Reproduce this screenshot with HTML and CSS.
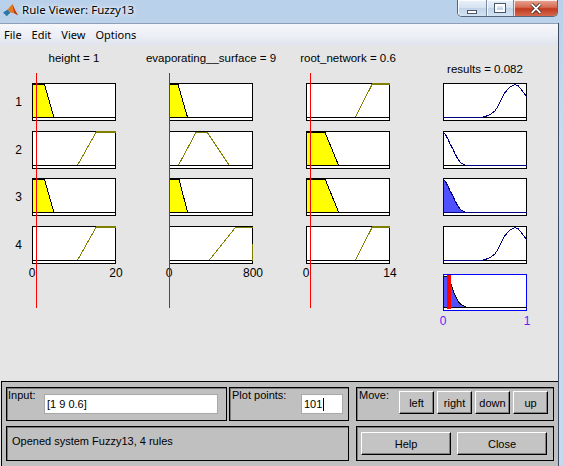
FILE: index.html
```html
<!DOCTYPE html>
<html lang="en">
<head>
    <meta charset="UTF-8">
    <title>Rule Viewer: Fuzzy13</title>
    <link rel="stylesheet" href="styles.css">
</head>
<body>

<div class="window">
    <div class="titlebar">
        <svg class="app-icon" viewBox="0 0 16 16">
            <polygon points="0,10 5,7 8,10 4,14" fill="#2b78a8"/>
            <polygon points="5,7 10,1 13,8 16,13 12,11 8,10" fill="#e27a1c"/>
            <polygon points="10,1 13,8 16,13 12,11" fill="#c0361b"/>
        </svg>
        <span class="title">Rule Viewer: Fuzzy13</span>
        <div class="win-buttons">
            <span class="wb min"></span>
            <span class="wb max"></span>
            <span class="wb close">
                <svg viewBox="0 0 16 12">
                    <path d="M3,1 L13,11 M13,1 L3,11" stroke="#3a2a28" stroke-width="4"/>
                    <path d="M3,1 L13,11 M13,1 L3,11" stroke="#fff" stroke-width="2.2"/>
                </svg>
            </span>
        </div>
    </div>

    <div class="client">
        <div class="menubar">
            <span>File</span>
            <span>Edit</span>
            <span>View</span>
            <span>Options</span>
        </div>

        <div class="figure">
            <div class="plots">
                <!-- rule numbers -->
                <div class="rule-nums">
                    <div>1</div>
                    <div>2</div>
                    <div>3</div>
                    <div>4</div>
                </div>

                <!-- input: height -->
                <div class="var-col">
                    <div class="var-title"><span>height = 1</span></div>
                    <div class="mf-stack">
                        <svg class="mf" viewBox="0 0 84 38" shape-rendering="crispEdges">
                            <rect class="frame" x="0.5" y="0.5" width="83" height="37"/>
                            <polygon class="fill-in" points="0.5,34.5 0.5,1.5 12.5,1.5 22,34.5"/>
                            <polyline class="edge" points="0,1.5 12.5,1.5 22,34.5"/>
                            <line class="base" x1="0" y1="34.5" x2="84" y2="34.5"/>
                        </svg>
                        <svg class="mf" viewBox="0 0 84 38" shape-rendering="crispEdges">
                            <rect class="frame" x="0.5" y="0.5" width="83" height="37"/>
                            <polyline class="olive" points="45.3,34.5 64,1.5 84,1.5"/>
                            <line class="olive" x1="64" y1="0.5" x2="84" y2="0.5"/>
                            <line class="base" x1="0" y1="34.5" x2="84" y2="34.5"/>
                        </svg>
                        <svg class="mf" viewBox="0 0 84 38" shape-rendering="crispEdges">
                            <rect class="frame" x="0.5" y="0.5" width="83" height="37"/>
                            <polygon class="fill-in" points="0.5,34.5 0.5,1.5 12.5,1.5 22,34.5"/>
                            <polyline class="edge" points="0,1.5 12.5,1.5 22,34.5"/>
                            <line class="base" x1="0" y1="34.5" x2="84" y2="34.5"/>
                        </svg>
                        <svg class="mf" viewBox="0 0 84 38" shape-rendering="crispEdges">
                            <rect class="frame" x="0.5" y="0.5" width="83" height="37"/>
                            <polyline class="olive" points="45.3,34.5 64,1.5 84,1.5"/>
                            <line class="olive" x1="64" y1="0.5" x2="84" y2="0.5"/>
                            <line class="base" x1="0" y1="34.5" x2="84" y2="34.5"/>
                        </svg>
                    </div>
                    <div class="axis"><span class="lo">0</span><span class="hi">20</span></div>
                    <div class="cursor" style="left: 4px;"></div>
                </div>

                <!-- input: evaporating__surface -->
                <div class="var-col">
                    <div class="var-title"><span>evaporating__surface = 9</span></div>
                    <div class="mf-stack">
                        <svg class="mf" viewBox="0 0 84 38" shape-rendering="crispEdges">
                            <rect class="frame" x="0.5" y="0.5" width="83" height="37"/>
                            <polygon class="fill-in" points="0.5,34.5 0.5,1.5 9,1.5 18.6,34.5"/>
                            <polyline class="edge" points="0,1.5 9,1.5 18.6,34.5"/>
                            <line class="base" x1="0" y1="34.5" x2="84" y2="34.5"/>
                        </svg>
                        <svg class="mf" viewBox="0 0 84 38" shape-rendering="crispEdges">
                            <rect class="frame" x="0.5" y="0.5" width="83" height="37"/>
                            <polyline class="olive" points="9.3,34.5 27,1.5 38.3,1.5 60.3,34.5"/>
                            <line class="base" x1="0" y1="34.5" x2="84" y2="34.5"/>
                        </svg>
                        <svg class="mf" viewBox="0 0 84 38" shape-rendering="crispEdges">
                            <rect class="frame" x="0.5" y="0.5" width="83" height="37"/>
                            <polygon class="fill-in" points="0.5,34.5 0.5,1.5 10,1.5 18.7,34.5"/>
                            <polyline class="edge" points="0,1.5 10,1.5 18.7,34.5"/>
                            <line class="base" x1="0" y1="34.5" x2="84" y2="34.5"/>
                        </svg>
                        <svg class="mf" viewBox="0 0 84 38" shape-rendering="crispEdges">
                            <rect class="frame" x="0.5" y="0.5" width="83" height="37"/>
                            <polyline class="olive" points="40,34.5 66.4,1.5 83.5,1.5 83.5,35"/>
                            <line class="edge" x1="83.5" y1="1.5" x2="83.5" y2="18"/>
                            <line class="base" x1="0" y1="34.5" x2="83" y2="34.5"/>
                        </svg>
                    </div>
                    <div class="axis"><span class="lo">0</span><span class="hi">800</span></div>
                    <div class="cursor" style="left: 0px;"></div>
                </div>

                <!-- input: root_network -->
                <div class="var-col">
                    <div class="var-title"><span>root_network = 0.6</span></div>
                    <div class="mf-stack">
                        <svg class="mf" viewBox="0 0 84 38" shape-rendering="crispEdges">
                            <rect class="frame" x="0.5" y="0.5" width="83" height="37"/>
                            <polyline class="olive" points="49.3,34.5 66,1.5 84,1.5"/>
                            <line class="olive" x1="66" y1="0.5" x2="84" y2="0.5"/>
                            <line class="base" x1="0" y1="34.5" x2="84" y2="34.5"/>
                        </svg>
                        <svg class="mf" viewBox="0 0 84 38" shape-rendering="crispEdges">
                            <rect class="frame" x="0.5" y="0.5" width="83" height="37"/>
                            <polygon class="fill-in" points="0.5,34.5 0.5,1.5 19,1.5 32.7,34.5"/>
                            <polyline class="edge" points="0,1.5 19,1.5 32.7,34.5"/>
                            <line class="base" x1="0" y1="34.5" x2="84" y2="34.5"/>
                        </svg>
                        <svg class="mf" viewBox="0 0 84 38" shape-rendering="crispEdges">
                            <rect class="frame" x="0.5" y="0.5" width="83" height="37"/>
                            <polygon class="fill-in" points="0.5,34.5 0.5,1.5 19.3,1.5 32.7,34.5"/>
                            <polyline class="edge" points="0,1.5 19.3,1.5 32.7,34.5"/>
                            <line class="base" x1="0" y1="34.5" x2="84" y2="34.5"/>
                        </svg>
                        <svg class="mf" viewBox="0 0 84 38" shape-rendering="crispEdges">
                            <rect class="frame" x="0.5" y="0.5" width="83" height="37"/>
                            <polyline class="olive" points="49.3,34.5 66,1.5 84,1.5"/>
                            <line class="olive" x1="66" y1="0.5" x2="84" y2="0.5"/>
                            <line class="base" x1="0" y1="34.5" x2="84" y2="34.5"/>
                        </svg>
                    </div>
                    <div class="axis"><span class="lo">0</span><span class="hi">14</span></div>
                    <div class="cursor" style="left: 4px;"></div>
                </div>

                <!-- output: results -->
                <div class="var-col output">
                    <div class="var-title"><span>results = 0.082</span></div>
                    <div class="mf-stack">
                        <svg class="mf" viewBox="0 0 84 38" shape-rendering="crispEdges">
                            <rect class="frame" x="0.5" y="0.5" width="83" height="37"/>
                            <line class="base" x1="0" y1="34.5" x2="84" y2="34.5"/>
                            <polyline class="out-line" points="0,34.5 35,34.5 41.7,33.8 46.7,31.7 51.7,28.3 55,23.3 58.3,16.7 61.7,10 66.7,4 71.7,1.5 75,2.5 78.3,6.7 84,14"/>
                        </svg>
                        <svg class="mf" viewBox="0 0 84 38" shape-rendering="crispEdges">
                            <rect class="frame" x="0.5" y="0.5" width="83" height="37"/>
                            <line class="base" x1="0" y1="34.5" x2="84" y2="34.5"/>
                            <polyline class="out-line" points="0.5,1.5 2.3,3.3 5,8.3 7.3,13.3 10,18.3 12.3,23.3 15,28.3 18.3,32.3 21.7,34 26.7,34.5 84,34.5"/>
                        </svg>
                        <svg class="mf" viewBox="0 0 84 38" shape-rendering="crispEdges">
                            <rect class="frame" x="0.5" y="0.5" width="83" height="37"/>
                            <polygon class="out-fill" points="0.5,34.5 0.5,1.5 2.3,3.3 5,8.3 7.3,13.3 10,18.3 12.3,23.3 15,28.3 18.3,32.3 21.7,34 26.7,34.5"/>
                            <line class="out-line" x1="0" y1="34.5" x2="84" y2="34.5"/>
                        </svg>
                        <svg class="mf" viewBox="0 0 84 38" shape-rendering="crispEdges">
                            <rect class="frame" x="0.5" y="0.5" width="83" height="37"/>
                            <line class="base" x1="0" y1="34.5" x2="84" y2="34.5"/>
                            <polyline class="out-line" points="0,34.5 35,34.5 41.7,33.8 46.7,31.7 51.7,28.3 55,23.3 58.3,16.7 61.7,10 66.7,4 71.7,1.5 75,2.5 78.3,6.7 84,14"/>
                        </svg>
                        <svg class="mf agg" viewBox="0 0 84 37" shape-rendering="crispEdges">
                            <rect class="agg-frame" x="0.5" y="0.5" width="83" height="36"/>
                            <polygon class="out-fill" points="0.5,33.5 0.5,2.5 5,2.5 8.3,10.7 11.7,20.7 15,27.3 18.3,30.7 21.7,32.3 24,33.5"/>
                            <polyline class="edge" points="0.5,2.5 5,2.5 8.3,10.7 11.7,20.7 15,27.3 18.3,30.7 21.7,32.3 24,33.5"/>
                            <line class="base" x1="0" y1="33.5" x2="84" y2="33.5"/>
                            <rect class="defuzz" x="3.5" y="1" width="4.5" height="33.5"/>
                        </svg>
                    </div>
                    <div class="axis out-axis"><span class="lo">0</span><span class="hi">1</span></div>
                </div>
            </div>

            <div class="panel">
                <div class="panel-row">
                    <div class="frame-box input-frame">
                        <span class="frame-label input-label">Input:</span>
                        <div class="field input-field">[1 9 0.6]</div>
                    </div>
                    <div class="frame-box points-frame">
                        <span class="frame-label points-label">Plot points:</span>
                        <div class="field points-field">101<span class="caret"></span></div>
                    </div>
                    <div class="frame-box move-frame">
                        <span class="frame-label move-label">Move:</span>
                        <button class="btn move-btn">left</button>
                        <button class="btn move-btn">right</button>
                        <button class="btn move-btn">down</button>
                        <button class="btn move-btn">up</button>
                    </div>
                </div>
                <div class="panel-row second">
                    <div class="frame-box status-frame">
                        <span class="status-text">Opened system Fuzzy13, 4 rules</span>
                    </div>
                    <div class="frame-box action-frame">
                        <button class="btn action-btn">Help</button>
                        <button class="btn action-btn">Close</button>
                    </div>
                </div>
            </div>
        </div>
    </div>
</div>

</body>
</html>
```

FILE: styles.css
```css
html, body {
    margin: 0;
    padding: 0;
    background-color: #c4d8ee;
}

.window {
    width: 563px;
    height: 466px;
    overflow: hidden;
    background: linear-gradient(180deg, #b9d0ea 0%, #c8dbf0 30%, #c6d9ee 100%);
}

/* title bar */
.titlebar {
    height: 23px;
    display: flex;
    align-items: flex-start;
    padding-left: 3px;
}

.app-icon {
    width: 15px;
    height: 15px;
    margin: 3px 4px 0 0;
}

.title {
    font-family: "Noto Sans", "Open Sans", sans-serif;
    font-size: 11.5px;
    line-height: 20px;
    color: #000;
    text-shadow: 0 0 6px #fff, 0 0 3px #fff;
}

.win-buttons {
    margin-left: auto;
    margin-right: 5px;
    display: flex;
    height: 17px;
    border: 1px solid #56657a;
    border-top: none;
    border-radius: 0 0 5px 5px;
    overflow: hidden;
    box-sizing: border-box;
}

.wb {
    display: flex;
    justify-content: center;
    align-items: center;
    height: 16px;
    background: linear-gradient(180deg, #eaf1f9 0%, #d6e3f2 48%, #c2d4e9 52%, #d3e3f4 100%);
    box-shadow: inset 1px 1px 0 rgba(255, 255, 255, 0.8);
}

.wb.min {
    width: 28px;
    border-right: 1px solid #7b8aa0;
}

.wb.max {
    width: 26px;
    border-right: 1px solid #7b8aa0;
}

.wb.close {
    width: 43px;
    background: linear-gradient(180deg, #e8a797 0%, #d86b52 45%, #c13a20 55%, #d4684d 100%);
}

.wb.min::after {
    content: "";
    width: 8px;
    height: 2px;
    margin-top: 7px;
    background: #fff;
    border: 1px solid #4b5668;
}

.wb.max::after {
    content: "";
    width: 6px;
    height: 4px;
    border: 2px solid #fff;
    outline: 1px solid #4b5668;
}

.wb.close svg {
    width: 14px;
    height: 11px;
}

/* client area */
.client {
    margin-right: 4px;
    border-right: 1px solid #3c4b60;
    height: 443px;
    background-color: #e5e5e5;
}

.menubar {
    height: 21px;
    border-top: 1px solid #8e9fb6;
    background: linear-gradient(180deg, #f6f7fb 0%, #eceef5 60%, #dfe3ec 100%);
    display: flex;
    align-items: center;
    padding-left: 4px;
    font-family: "Noto Sans", "Open Sans", sans-serif;
    font-size: 11px;
    color: #000;
}

.menubar span {
    margin-right: 10px;
}

.figure {
    height: 421px;
    display: flex;
    flex-direction: column;
    background-color: #e5e5e5;
    font-family: "Liberation Sans", Arial, sans-serif;
    color: #000;
}

/* plot grid */
.plots {
    display: flex;
    padding-top: 6px;
}

.rule-nums {
    width: 32px;
    padding-top: 32px;
    display: flex;
    flex-direction: column;
    gap: 9.67px;
    font-size: 12px;
}

.rule-nums div {
    height: 38px;
    line-height: 38px;
    text-align: right;
    padding-right: 10px;
}

.var-col {
    position: relative;
    width: 84px;
    margin-right: 53px;
    display: flex;
    flex-direction: column;
}

.var-col.output {
    margin-right: 0;
}

.var-title {
    display: flex;
    justify-content: center;
    height: 14px;
    line-height: 14px;
    font-size: 11.5px;
    white-space: nowrap;
    margin-bottom: 18px;
}

.output .var-title {
    margin-top: 11px;
    margin-bottom: 7px;
}

.mf-stack {
    display: flex;
    flex-direction: column;
    gap: 9.67px;
}

.output .mf-stack .agg {
    margin-top: 0.33px;
}

.mf {
    display: block;
    width: 84px;
    height: 38px;
}

.mf.agg {
    height: 37px;
}

.frame {
    fill: #fff;
    stroke: #000;
}

.agg-frame {
    fill: #fff;
    stroke: #0000ff;
}

.base {
    stroke: #000;
}

.fill-in {
    fill: #ffff00;
    stroke: none;
}

.edge {
    fill: none;
    stroke: #000;
}

.olive {
    fill: none;
    stroke: #808000;
}

.out-line {
    fill: none;
    stroke: #000080;
}

.out-fill {
    fill: #5050ff;
    stroke: #000080;
}

.defuzz {
    fill: #ff0000;
}

.axis {
    display: flex;
    justify-content: space-between;
    margin-top: 2px;
    height: 14px;
    line-height: 14px;
    font-size: 12px;
}

.axis .lo {
    transform: translateX(-50%);
}

.axis .hi {
    transform: translateX(50%);
}

.out-axis {
    margin-top: 3px;
    color: #6a1aff;
}

.cursor {
    position: absolute;
    top: 22px;
    width: 1px;
    height: 235px;
    background-color: #ff0000;
}

/* bottom control panel */
.panel {
    margin-top: auto;
    margin-left: 1px;
    height: 85px;
    box-sizing: border-box;
    background-color: #c0c0c0;
    border-top: 1px solid #000;
    border-left: 1px solid #000;
    padding: 5px 0 0 4px;
    font-size: 11px;
}

.panel-row {
    display: flex;
}

.panel-row.second {
    margin-top: 5px;
}

.frame-box {
    box-sizing: border-box;
    height: 34px;
    border: 1px solid #000;
    box-shadow: inset 1px 1px 0 #7a7a7a;
    display: flex;
    align-items: flex-start;
}

.input-frame {
    width: 221px;
}

.points-frame {
    width: 120px;
    margin-left: 2px;
}

.move-frame {
    width: 198px;
    margin-left: 7px;
}

.status-frame {
    width: 343px;
    height: 35px;
}

.action-frame {
    width: 198px;
    height: 35px;
    margin-left: 7px;
}

.frame-label {
    line-height: 12px;
    padding: 1px 0 0 1px;
    box-sizing: border-box;
}

.input-label {
    width: 37px;
}

.points-label {
    width: 71px;
    padding-left: 2px;
}

.move-label {
    width: 42px;
    padding-left: 2px;
}

.field {
    margin-top: 6px;
    height: 20px;
    box-sizing: border-box;
    background-color: #fff;
    border: 1px solid #a8a8a8;
    padding-left: 2px;
    line-height: 18px;
    font-size: 11px;
    display: flex;
    align-items: center;
}

.input-field {
    width: 174px;
}

.points-field {
    width: 42px;
}

.caret {
    width: 1px;
    height: 13px;
    margin-left: 1px;
    background-color: #000;
}

.btn {
    box-sizing: border-box;
    height: 23px;
    padding: 0;
    font-family: "Liberation Sans", Arial, sans-serif;
    font-size: 11px;
    color: #000;
    background-color: #c4c4c4;
    border: 1px solid;
    border-color: #fff #000 #000 #fff;
    box-shadow: inset -1px -1px 0 #808080;
}

.move-btn {
    width: 35px;
    margin-top: 3px;
    margin-right: 3px;
}

.action-btn {
    width: 90px;
    margin-top: 5px;
    margin-left: 4px;
}

.action-btn + .action-btn {
    margin-left: 6px;
}

.status-text {
    padding: 7px 0 0 5px;
    line-height: 14px;
    white-space: nowrap;
}
```
